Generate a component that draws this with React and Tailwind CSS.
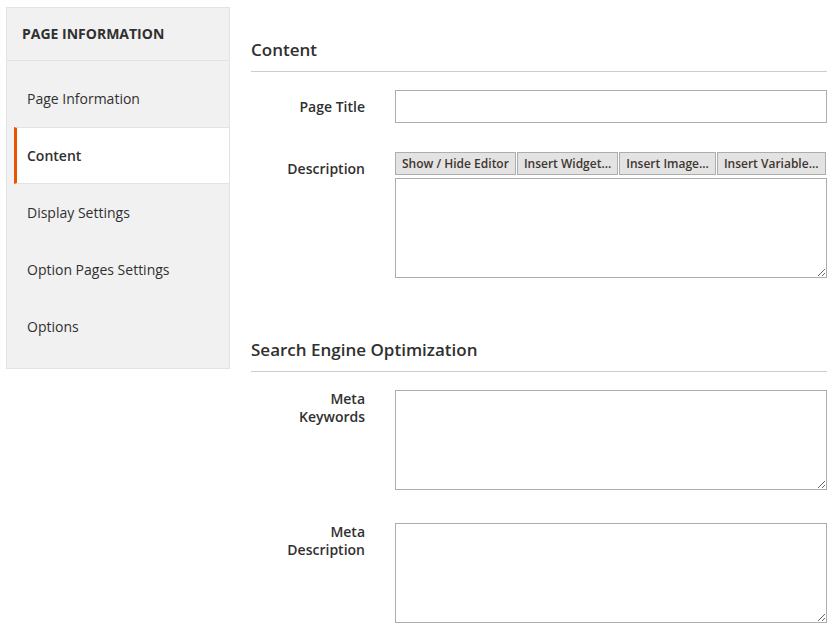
import React from "react";

const navItems = [
  { label: "Page Information" },
  { label: "Content", active: true },
  { label: "Display Settings" },
  { label: "Option Pages Settings" },
  { label: "Options" },
];

function Label({ children, className = "" }) {
  return (
    <div className={`w-[114px] shrink-0 text-right text-[14px] font-semibold leading-[18px] text-[#303030] ${className}`}>
      {children}
    </div>
  );
}

export default function App() {
  return (
    <div className="flex items-start bg-white min-h-[629px] pl-[6px] pr-[7px] font-['Open_Sans',sans-serif] text-[#303030]">
      <aside className="mt-[7px] w-[224px] shrink-0 border border-[#e3e3e3] bg-[#f1f1f1]">
        <div className="flex h-[53px] items-center border-b border-[#e3e3e3] px-[15px] pb-[1px] text-[14px] font-bold uppercase text-[#303030]">
          Page Information
        </div>
        <ul className="pt-[9px] pb-[13px]">
          {navItems.map((item) =>
            item.active ? (
              <li
                key={item.label}
                className="ml-[7px] flex h-[57px] items-center border-y border-l-[3px] border-y-[#e3e3e3] border-l-[#eb5202] bg-white pl-[10px] text-[14px] font-semibold text-[#303030]"
              >
                {item.label}
              </li>
            ) : (
              <li
                key={item.label}
                className="flex h-[57px] items-center pl-[20px] text-[14px] text-[#303030]"
              >
                {item.label}
              </li>
            )
          )}
        </ul>
      </aside>

      <main className="ml-[21px] w-[576px] min-w-0 shrink-0 pt-[38px]">
        <h2 className="border-b border-[#cccccc] pb-[9px] text-[17px] font-semibold leading-[24px] text-[#303030]">
          Content
        </h2>

        <div className="mt-[18px] flex items-center">
          <Label>Page Title</Label>
          <input
            type="text"
            className="ml-[30px] h-[33px] min-w-0 flex-1 border border-[#adadad] bg-white px-2 text-[14px] outline-none"
          />
        </div>

        <div className="mt-[29px] flex items-start">
          <Label className="pt-[8px]">Description</Label>
          <div className="ml-[30px] flex min-w-0 flex-1 flex-col">
            <div className="flex gap-[1px]">
              {["Show / Hide Editor", "Insert Widget...", "Insert Image...", "Insert Variable..."].map((b) => (
                <button
                  key={b}
                  type="button"
                  className="h-[23px] shrink-0 whitespace-nowrap border border-[#adadad] bg-[#e3e3e3] px-[6px] text-[12px] font-semibold leading-[20px] text-[#41362f]"
                >
                  {b}
                </button>
              ))}
            </div>
            <textarea className="mt-[3px] h-[100px] w-full border border-[#adadad] bg-white outline-none" />
          </div>
        </div>

        <h2 className="mt-[60px] border-b border-[#cccccc] pb-[9px] text-[17px] font-semibold leading-[24px] text-[#303030]">
          Search Engine Optimization
        </h2>

        <div className="mt-[18px] flex items-start">
          <Label>
            Meta
            <br />
            Keywords
          </Label>
          <textarea className="ml-[30px] h-[100px] min-w-0 flex-1 border border-[#adadad] bg-white outline-none" />
        </div>

        <div className="mt-[33px] flex items-start">
          <Label>
            Meta
            <br />
            Description
          </Label>
          <textarea className="ml-[30px] h-[100px] min-w-0 flex-1 border border-[#adadad] bg-white outline-none" />
        </div>
      </main>
    </div>
  );
}
